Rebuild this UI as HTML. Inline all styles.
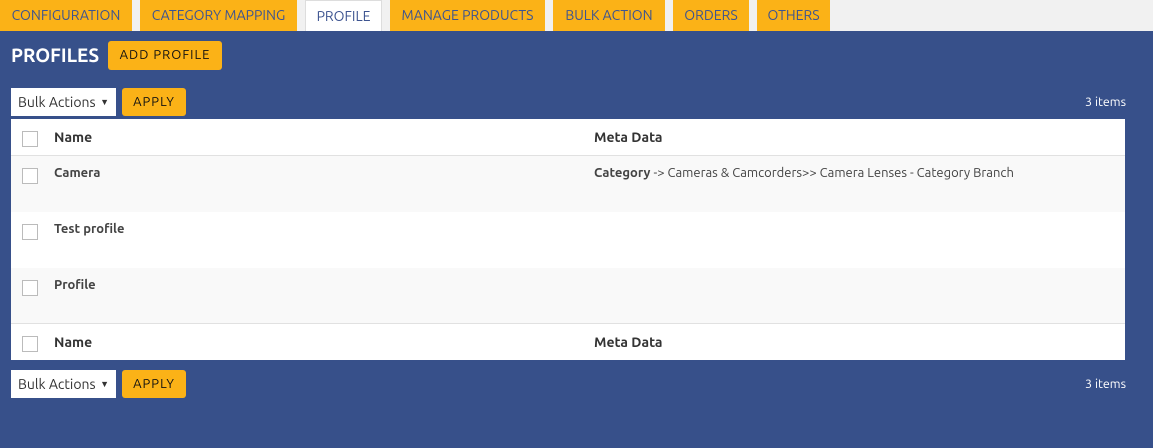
<!DOCTYPE html>
<html><head><meta charset="utf-8"><style>
*{box-sizing:border-box;margin:0;padding:0}
body{width:1153px;height:448px;background:#37508a;font-family:"Ubuntu","Liberation Sans","DejaVu Sans",sans-serif;position:relative;overflow:hidden}
.tabs{position:absolute;left:0;top:0;width:1153px;height:31px;background:#f1f1f1}
.tab{position:absolute;top:0;height:31px;background:#fbb217;color:#3d5490;font-size:14px;line-height:30px;text-align:center}
.tab.act{background:#fff;border:1px solid #ddd;border-bottom:none}
.h{position:absolute;left:11px;top:44px;color:#fff;font-weight:bold;font-size:19px}
.btn{position:absolute;background:#fbb217;color:#111;font-size:13px;letter-spacing:1px;text-align:center;border-radius:3px}
.sel{position:absolute;left:11px;width:105px;height:28px;background:#fff;font-size:14px;color:#333;line-height:28px;padding-left:7px}
.sel span{position:absolute;right:7px;font-size:9px}
.items{position:absolute;right:27px;color:#fff;font-size:12.5px}
.tbl{position:absolute;left:11px;top:119px;width:1114px;height:241px;background:#fff}
.row{position:absolute;left:0;width:1114px}
.cb{position:absolute;left:11px;width:16px;height:16px;border:1px solid #bbb;background:#fff}
.t{position:absolute;left:43px;font-size:13px;font-weight:bold;color:#444}
.m{position:absolute;left:583px;font-size:13px;color:#444}
.th{font-size:14px;color:#333}
</style></head><body>
<div class="tabs">
<div class="tab" style="left:0;width:132px">CONFIGURATION</div>
<div class="tab" style="left:140px;width:157px">CATEGORY MAPPING</div>
<div class="tab act" style="left:305px;width:77px">PROFILE</div>
<div class="tab" style="left:390px;width:155px">MANAGE PRODUCTS</div>
<div class="tab" style="left:553px;width:112px">BULK ACTION</div>
<div class="tab" style="left:673px;width:76px">ORDERS</div>
<div class="tab" style="left:757px;width:73px">OTHERS</div>
</div>
<div class="h">PROFILES</div>
<div class="btn" style="left:108px;top:41px;width:114px;height:29px;line-height:29px">ADD PROFILE</div>
<div class="sel" style="top:88px">Bulk Actions<span>▼</span></div>
<div class="btn" style="left:122px;top:88px;width:64px;height:28px;line-height:28px">APPLY</div>
<div class="items" style="top:95px">3 items</div>
<div class="tbl">
<div class="row" style="top:0;height:37px;border-bottom:1px solid #e1e1e1"><div class="cb" style="top:12px"></div><div class="t th" style="top:10px">Name</div><div class="m th" style="top:10px;font-weight:bold">Meta Data</div></div>
<div class="row" style="top:37px;height:56px;background:#f9f9f9"><div class="cb" style="top:12px"></div><div class="t" style="top:10px">Camera</div><div class="m" style="top:10px"><b>Category</b> -&gt; Cameras &amp; Camcorders&gt;&gt; Camera Lenses - Category Branch</div></div>
<div class="row" style="top:93px;height:56px"><div class="cb" style="top:12px"></div><div class="t" style="top:10px">Test profile</div></div>
<div class="row" style="top:149px;height:56px;background:#f9f9f9;border-bottom:1px solid #e1e1e1"><div class="cb" style="top:12px"></div><div class="t" style="top:10px">Profile</div></div>
<div class="row" style="top:205px;height:36px"><div class="cb" style="top:12px"></div><div class="t th" style="top:10px">Name</div><div class="m th" style="top:10px;font-weight:bold">Meta Data</div></div>
</div>
<div class="sel" style="top:370px">Bulk Actions<span>▼</span></div>
<div class="btn" style="left:122px;top:370px;width:64px;height:28px;line-height:28px">APPLY</div>
<div class="items" style="top:377px">3 items</div>
</body></html>
